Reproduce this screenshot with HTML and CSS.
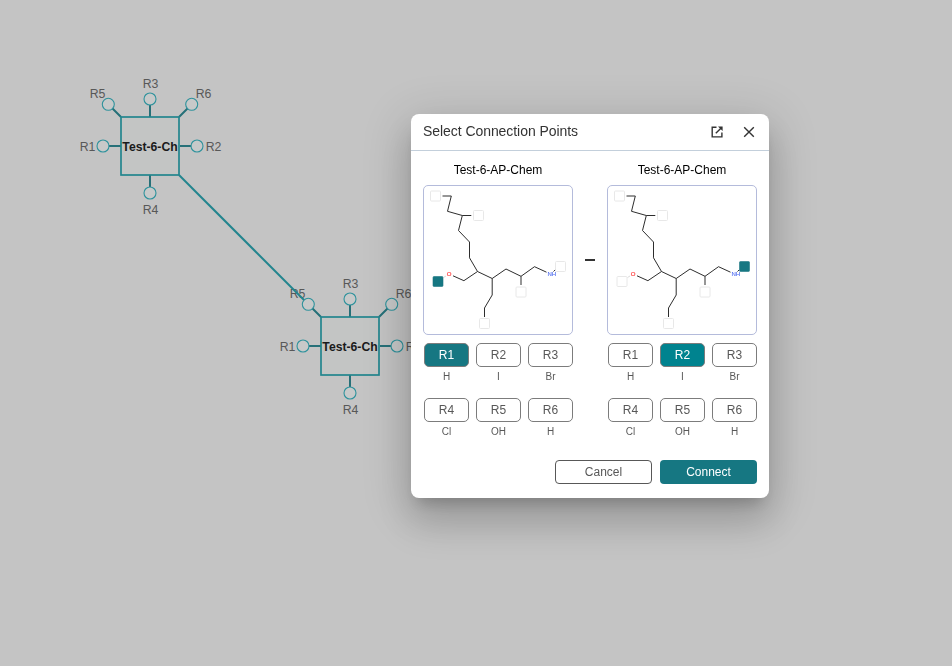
FILE: index.html
```
<!DOCTYPE html>
<html lang="en">
<head>
<meta charset="utf-8">
<title>Select Connection Points</title>
<link rel="stylesheet" href="styles.css">
</head>
<body>
<svg class="canvas" width="952" height="666" viewBox="0 0 952 666">
  <defs>
    <g id="monomer">
      <path class="stub" d="M31 0H43M-28 0H-41M1 -29V-41M1 29V41M-28 -29L-36.500 -37.500M30 -29L38.500 -37.500"/>
      <rect class="node" x="-28" y="-29" width="58" height="58"/>
      <g class="points">
        <circle cx="-46" cy="0" r="6"/><circle cx="48" cy="0" r="6"/>
        <circle cx="1" cy="-47" r="6"/><circle cx="1" cy="47" r="6"/>
        <circle cx="-40.700" cy="-41.700" r="6"/><circle cx="42.700" cy="-41.700" r="6"/>
      </g>
      <text class="node-name" x="1" y="5">Test-6-Ch</text>
      <g class="node-label">
        <text x="-61.500" y="5">R1</text><text x="64.500" y="5">R2</text>
        <text x="1.500" y="-58">R3</text><text x="1.500" y="68">R4</text>
        <text x="-51.500" y="-48">R5</text><text x="54.500" y="-48">R6</text>
      </g>
    </g>
    <g id="molecule">
      <path class="bond" d="M18.500 10H27.300L23.500 25.300L38.300 29.500H47.300M38.300 29.500L34.500 44.500L45.500 56V71.800L53.500 85.500L39.900 94.700L29 89.800M53.500 85.500L68.200 92.500V109L60.500 122V131M68.200 92.500L82 83L97 90.300V99M97 90.300L110.500 80.700L122.500 86.200M129.500 85.500L132 83"/>
      <path class="bond-faint" d="M19.500 91.500L22 90"/>
      <text class="atom oxygen" x="25" y="90.300">O</text>
      <text class="atom nitrogen" x="127.800" y="90.300">NH</text>
      <g class="site">
        <rect x="6.500" y="5" width="10" height="10" rx="1"/>
        <rect x="49.500" y="24.500" width="10" height="10" rx="1"/>
        <rect x="9" y="90.500" width="10" height="10" rx="1"/>
        <rect x="131.500" y="75.500" width="10" height="10" rx="1"/>
        <rect x="92" y="101" width="10" height="10" rx="1"/>
        <rect x="55.500" y="132.500" width="10" height="10" rx="1"/>
      </g>
    </g>
  </defs>
  <use href="#monomer" x="149" y="146"/>
  <use href="#monomer" x="349" y="346"/>
  <path class="link" d="M179 175L304 300"/>
</svg>

<section class="dialog">
  <header class="dialog-head">
    <h1>Select Connection Points</h1>
    <div class="head-icons">
      <svg width="12" height="12" viewBox="0 0 12 12"><path d="M5.500 1.200H1.200V10.900H10.900V6.500M4.800 7.300L10.200 1.900"/><path class="solid" d="M7 .5H11.600V5.100Z"/></svg>
      <svg width="12" height="12" viewBox="0 0 12 12"><path d="M1.200 1.200L10.800 10.800M10.800 1.200L1.200 10.800"/></svg>
    </div>
  </header>
  <div class="dialog-body">
    <div class="monomer">
      <h2>Test-6-AP-Chem</h2>
      <div class="structure"><svg width="148" height="148" viewBox="0 0 148 148"><use href="#molecule"/><rect class="picked" x="9" y="90.500" width="10" height="10" rx="1"/></svg></div>
      <div class="groups">
        <div class="group"><button class="chosen">R1</button><span>H</span></div>
        <div class="group"><button>R2</button><span>I</span></div>
        <div class="group"><button>R3</button><span>Br</span></div>
        <div class="group"><button>R4</button><span>Cl</span></div>
        <div class="group"><button>R5</button><span>OH</span></div>
        <div class="group"><button>R6</button><span>H</span></div>
      </div>
    </div>
    <div class="dash"></div>
    <div class="monomer">
      <h2>Test-6-AP-Chem</h2>
      <div class="structure"><svg width="148" height="148" viewBox="0 0 148 148"><use href="#molecule"/><rect class="picked" x="131.500" y="75.500" width="10" height="10" rx="1"/></svg></div>
      <div class="groups">
        <div class="group"><button>R1</button><span>H</span></div>
        <div class="group"><button class="chosen bright">R2</button><span>I</span></div>
        <div class="group"><button>R3</button><span>Br</span></div>
        <div class="group"><button>R4</button><span>Cl</span></div>
        <div class="group"><button>R5</button><span>OH</span></div>
        <div class="group"><button>R6</button><span>H</span></div>
      </div>
    </div>
  </div>
  <footer class="actions">
    <button class="cancel">Cancel</button>
    <button class="connect">Connect</button>
  </footer>
</section>
</body>
</html>
```
FILE: styles.css
```
* { box-sizing: border-box; }
body {
  margin: 0;
  height: 666px;
  overflow: hidden;
  background: #c4c4c4;
  font-family: "Liberation Sans", Arial, sans-serif;
  color: #585858;
}
.canvas { display: block; }
.stub { stroke: #267078; stroke-width: 2; fill: none; }
.node { fill: #c3c5c4; stroke: #23858e; stroke-width: 1.7; }
.points { fill: #c7c9c9; stroke: #2e929c; stroke-width: 1.1; }
.link { stroke: #23858e; stroke-width: 2; }
.node-name { font-size: 12.2px; font-weight: 700; fill: #1a1a1a; text-anchor: middle; }
.node-label { font-size: 12.3px; fill: #585858; text-anchor: middle; }

.dialog {
  position: absolute;
  left: 411px;
  top: 114px;
  width: 358px;
  height: 384px;
  background: #fff;
  border-radius: 8px;
  box-shadow: 0 11px 15px -7px rgba(0, 0, 0, .2), 0 24px 38px 3px rgba(0, 0, 0, .14), 0 9px 46px 8px rgba(0, 0, 0, .12);
  will-change: transform;
}
.dialog-head {
  display: flex;
  align-items: center;
  justify-content: space-between;
  height: 37px;
  padding: 0 14px 0 12px;
  border-bottom: 1px solid #c3cfdb;
}
h1 { margin: 0; padding-bottom: 2px; font-size: 14px; line-height: 16px; font-weight: 400; letter-spacing: -.06px; color: #333; }
.head-icons { display: flex; gap: 20px; }
.head-icons svg { fill: none; stroke: #333; stroke-width: 1.4; }
.head-icons .solid { fill: #333; stroke: none; }
.dialog-body { display: flex; justify-content: space-between; padding: 12px 12px 0; }
.monomer { width: 150px; }
h2 { margin: 0 0 8px; font-size: 12px; line-height: 14px; font-weight: 400; text-align: center; color: #000; }
.structure { height: 150px; border: 1px solid #b4bbdb; border-radius: 5px; }
.structure svg { display: block; }
.bond { fill: none; stroke: #222; stroke-width: .95; }
.bond-faint { stroke: #ccc; stroke-width: .7; }
.atom { font-size: 6px; text-anchor: middle; }
.oxygen { fill: #f44; stroke: #f44; stroke-width: .2; }
.nitrogen { fill: #4766ee; stroke: #4766ee; stroke-width: .1; }
.site { fill: #fff; stroke: #e5e5e5; stroke-width: .9; }
.picked { fill: #167782; stroke: #167782; stroke-width: .5; }
.dash { width: 10px; height: 2px; margin-top: 96px; background: #333; }
.groups { display: grid; grid-template-columns: repeat(3, 45px); gap: 15px 7px; padding: 8px 1px 0; }
.group { display: flex; flex-direction: column; align-items: center; height: 40px; }
button { padding: 0; font-family: inherit; font-size: 12px; line-height: 14px; border-radius: 4px; background: #fff; color: #585858; }
.group button { width: 45px; height: 24px; border: 1px solid #7c7c7c; border-radius: 5px; }
.group .chosen { background: #167782; color: #fff; }
.group .bright { background: #00838f; }
.group span { margin-top: 4px; font-size: 10px; line-height: 12px; }
.actions { display: flex; justify-content: flex-end; gap: 8px; padding: 22px 12px 0; }
.actions button { width: 97px; height: 24px; }
.cancel { border: 1px solid #585858; }
.actions .connect { border: 0; background: #167782; color: #fff; }
```
